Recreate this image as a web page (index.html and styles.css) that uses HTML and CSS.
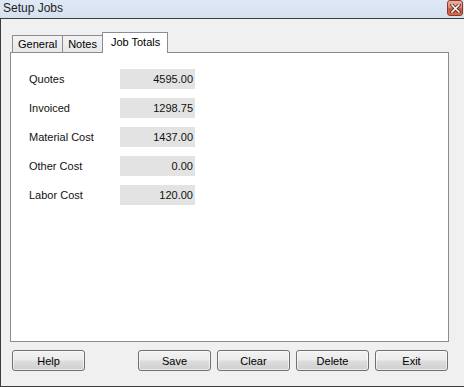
FILE: index.html
```html
<!DOCTYPE html>
<html>
<head>
<meta charset="utf-8">
<link rel="stylesheet" href="styles.css">
</head>
<body>
<div class="window">
  <div class="titlebar">
    <span class="title">Setup Jobs</span>
    <span class="close">
      <svg width="11" height="9" viewBox="0 0 11 9"><path d="M2 1 L9 8 M9 1 L2 8" stroke="#5a2418" stroke-width="3.2" stroke-linecap="square"/><path d="M2 1 L9 8 M9 1 L2 8" stroke="#ffffff" stroke-width="1.6" stroke-linecap="square"/></svg>
    </span>
  </div>
  <div class="client">
    <div class="tabs">
      <div class="tab">General</div>
      <div class="tab">Notes</div>
      <div class="tab active">Job Totals</div>
    </div>
    <div class="panel">
      <div class="grid">
        <span class="label">Quotes</span><span class="field">4595.00</span>
        <span class="label">Invoiced</span><span class="field">1298.75</span>
        <span class="label">Material Cost</span><span class="field">1437.00</span>
        <span class="label">Other Cost</span><span class="field">0.00</span>
        <span class="label">Labor Cost</span><span class="field">120.00</span>
      </div>
    </div>
    <div class="buttons">
      <button class="btn">Help</button>
      <span class="spacer"></span>
      <button class="btn">Save</button>
      <button class="btn">Clear</button>
      <button class="btn">Delete</button>
      <button class="btn">Exit</button>
    </div>
  </div>
</div>
</body>
</html>
```

FILE: styles.css
```css
html, body {
  margin: 0;
  padding: 0;
  width: 464px;
  height: 387px;
  overflow: hidden;
  background: #d9e4f1;
}
.window {
  width: 464px;
  height: 387px;
  display: flex;
  flex-direction: column;
  font-family: "Liberation Sans", Arial, sans-serif;
  font-size: 11px;
  color: #000;
}
.titlebar {
  height: 19px;
  display: flex;
  align-items: center;
  justify-content: space-between;
  background: linear-gradient(#dfe9f5, #d5e1ef);
  padding: 0 1px 0 3px;
}
.title {
  font-size: 12px;
  color: #1e1e1e;
  margin-top: -3px;
}
.close {
  width: 14px;
  height: 14px;
  margin-top: -2px;
  border: 1px solid #8a3a2c;
  border-radius: 3px;
  background: linear-gradient(#eeb0a2, #de8a74 45%, #cc5a40 55%, #d46a4e);
  display: flex;
  align-items: center;
  justify-content: center;
}
.client {
  width: 461px;
  height: 364px;
  border: 1px solid #3c3c3c;
  background: #f0f0f0;
  display: flex;
  flex-direction: column;
  padding: 13px 0 0 9px;
  box-sizing: content-box;
}
.tabs {
  display: flex;
  align-items: flex-end;
  height: 20px;
  padding-left: 2px;
}
.tab {
  height: 16px;
  line-height: 16px;
  padding: 0 5px 0 5px;
  border: 1px solid #898c95;
  border-bottom: none;
  border-right: none;
  background: linear-gradient(#f3f3f3, #e8e8e8);
}
.tab.active {
  position: relative;
  z-index: 1;
  height: 20px;
  line-height: 18px;
  margin-bottom: -1px;
  background: #ffffff;
  border-right: 1px solid #898c95;
  padding: 0 7px 0 8px;
}
.panel {
  border: 1px solid #898c95;
  background: #ffffff;
  padding: 16px 0 0 18px;
  box-sizing: border-box;
  width: 439px;
  height: 290px;
}
.grid {
  display: grid;
  grid-template-columns: 91px 75px;
  grid-auto-rows: 20px;
  row-gap: 9px;
  align-items: center;
}
.field {
  height: 20px;
  line-height: 20px;
  background: #e3e3e3;
  text-align: right;
  padding-right: 2px;
  color: #111;
}
.label {
  color: #111;
}
.buttons {
  display: flex;
  gap: 6px;
  margin-top: 8px;
  padding-left: 2px;
  width: 436px;
}
.spacer {
  flex: 1;
}
.btn {
  width: 73px;
  height: 21px;
  border: 1px solid #707070;
  border-radius: 3px;
  background: linear-gradient(#f2f2f2 0%, #ebebeb 48%, #dddddd 52%, #cfcfcf 100%);
  font-family: "Liberation Sans", Arial, sans-serif;
  font-size: 11px;
  color: #000;
  padding: 0;
  box-shadow: inset 0 0 0 1px rgba(255,255,255,0.6);
}
```
